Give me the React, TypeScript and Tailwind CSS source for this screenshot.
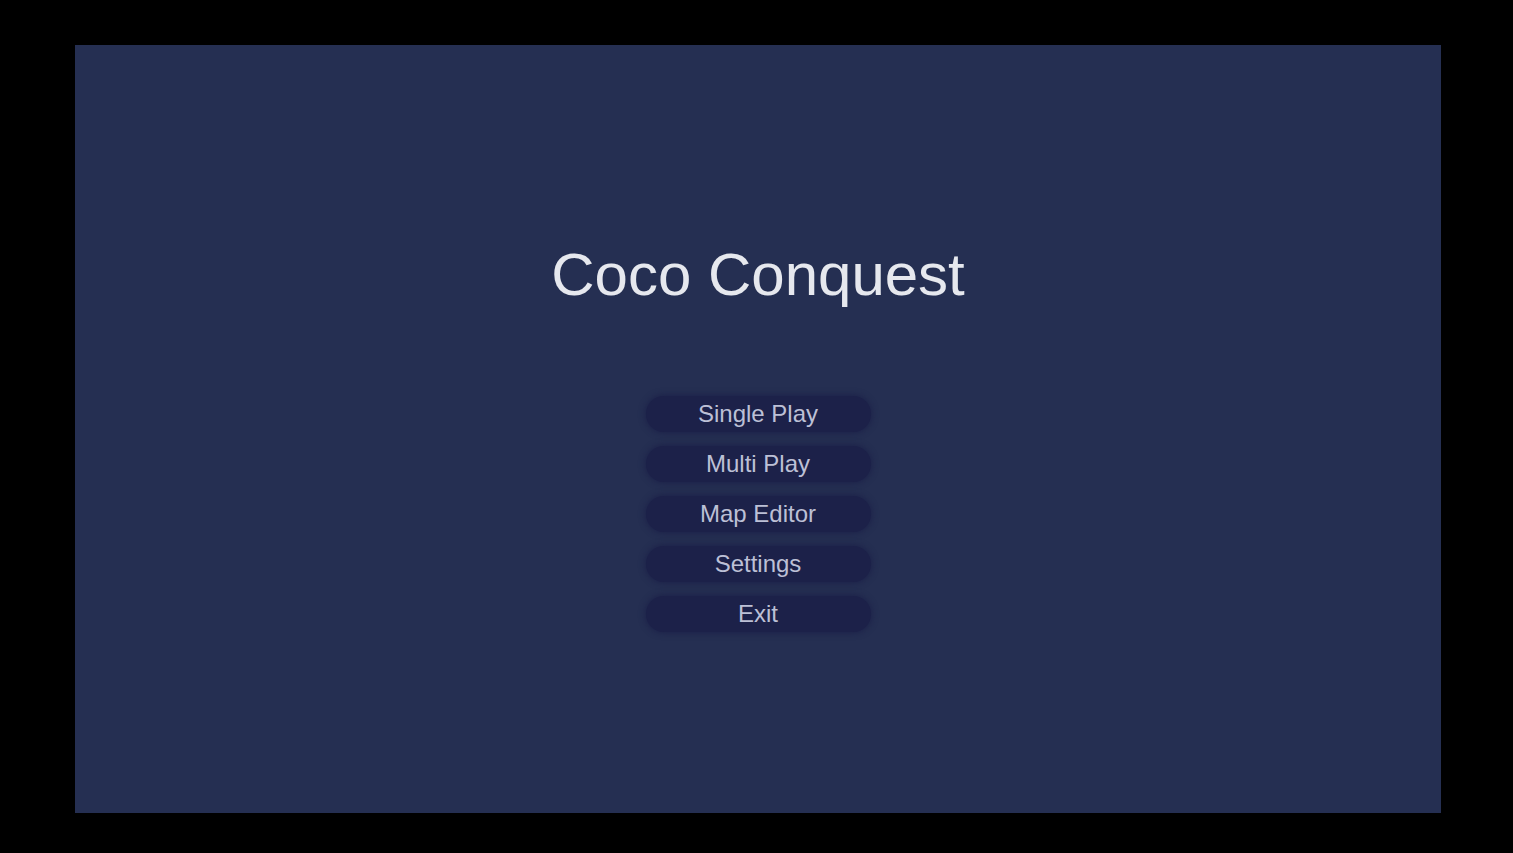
const items = ['Single Play', 'Multi Play', 'Map Editor', 'Settings', 'Exit'];

export default function App() {
  return (
    <div className="h-screen w-full bg-black pl-[75px] pt-[45px]">
      <div
        className="flex h-[768px] w-[1366px] flex-col items-center bg-[#252f52] pt-[200px]"
        style={{ fontFamily: '"Liberation Sans", Arial, sans-serif' }}
      >
        <h1 className="text-[60px] leading-none text-[#e6e8ee]">Coco Conquest</h1>
        <div className="mt-[91px] flex flex-col gap-[14px]">
          {items.map((label) => (
            <button
              key={label}
              className="flex h-9 w-[225px] items-center justify-center rounded-full bg-[#1c2149] text-[24px] leading-none text-[#bcc0d6] shadow-[0_0_6px_1px_#1c2149]"
            >
              {label}
            </button>
          ))}
        </div>
      </div>
    </div>
  );
}
